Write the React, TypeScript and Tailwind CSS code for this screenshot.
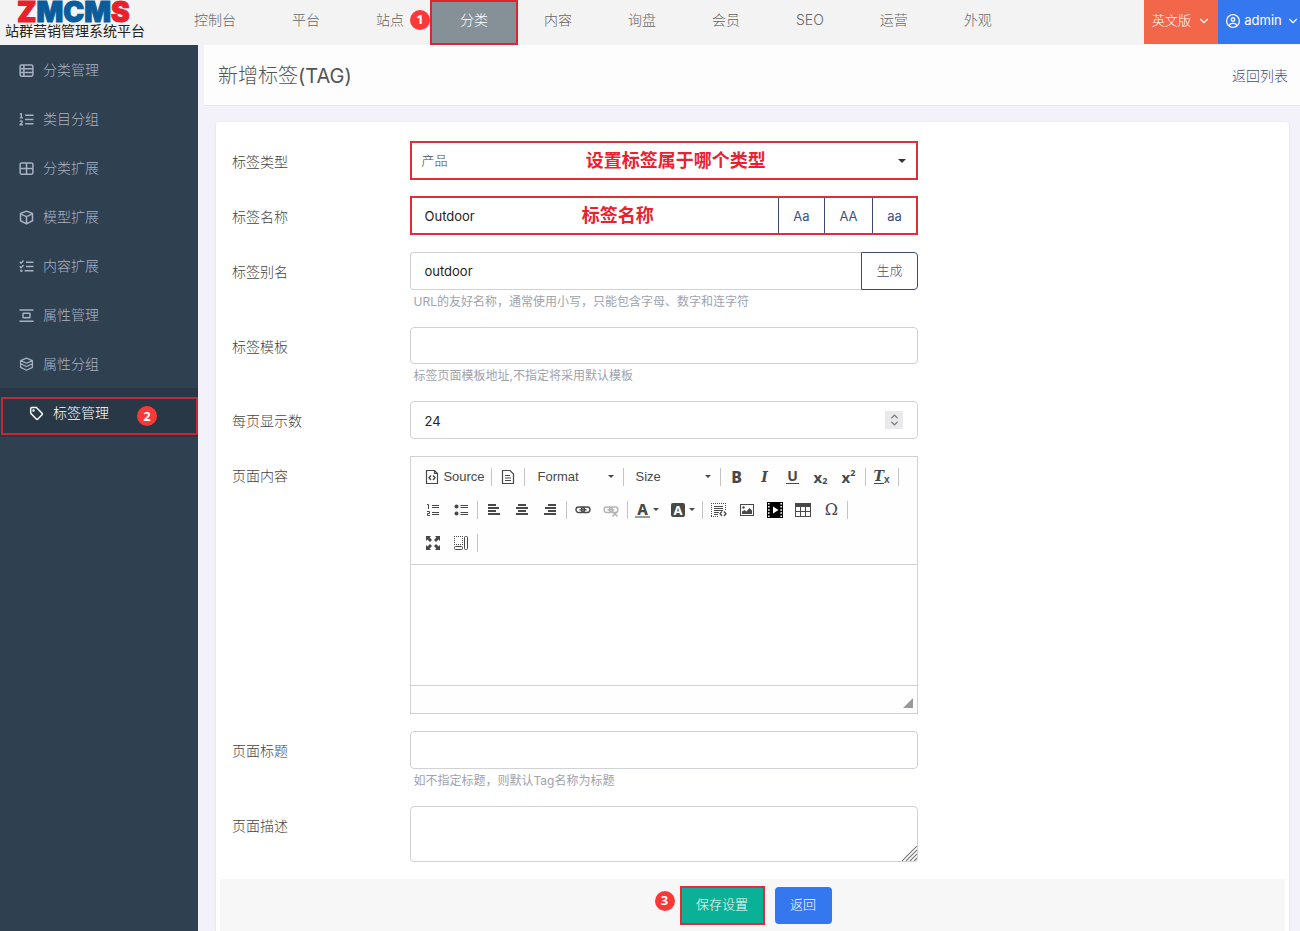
import { useState } from 'react';
import type { ReactNode } from 'react';
import clsx from 'clsx';
import { FaRegCircleUser } from 'react-icons/fa6';
import { LuChevronDown, LuChevronUp } from 'react-icons/lu';

const navItems = ['控制台', '平台', '站点', '分类', '内容', '询盘', '会员', 'SEO', '运营', '外观'];

const sideItems = [
  { name: '分类管理', icon: 'table' },
  { name: '类目分组', icon: 'ordered' },
  { name: '分类扩展', icon: 'grid' },
  { name: '模型扩展', icon: 'cube' },
  { name: '内容扩展', icon: 'check' },
  { name: '属性管理', icon: 'distribute' },
  { name: '属性分组', icon: 'layers' },
  { name: '标签管理', icon: 'tag' },
];

const sidePaths: Record<string, ReactNode> = {
  table: (
    <>
      <rect x="1.2" y="2" width="13.6" height="12" rx="1.5" />
      <path d="M1.2 6h13.6M1.2 10h13.6M5.2 2v12" />
    </>
  ),
  ordered: (
    <>
      <path d="M6.5 3.5H15.5M6.5 8H15.5M6.5 12.5H15.5" />
      <path d="M1 2.3l1.5-.6v4.6M.8 6.3h3.4M1 10.2c.8-1.1 2.7-.7 2.5.5-.1.8-1.4 1.7-2.5 2.9h3.2" strokeWidth="1.4" />
    </>
  ),
  grid: (
    <>
      <rect x="1.2" y="2" width="13.6" height="12" rx="1.5" />
      <path d="M1.2 8h13.6M8 2v12" />
    </>
  ),
  cube: <path d="M8 1.2l6.4 2.5v7.8L8 14.8l-6.4-3.3V3.7L8 1.2zM1.6 4.2L8 7l6.4-2.8M8 7v7.6" />,
  check: (
    <>
      <path d="M7.5 3.5H15.5M7.5 8H15.5M6 12.5h9.5" />
      <path d="M.8 3l1.4 1.500L4.800 1.600M.8 7.800l1.400 1.500 2.600-2.900" strokeWidth="1.4" />
      <circle cx="2.5" cy="12.5" r=".6" />
    </>
  ),
  distribute: (
    <>
      <path d="M.5 2h15M.5 14h15" />
      <rect x="4.3" y="5.6" width="7.4" height="4.8" rx=".6" />
    </>
  ),
  layers: (
    <path d="M8 1.2l6.3 2.700L8 6.600 1.700 3.900 8 1.200zM1.700 3.900v3.300L8 10.200l6.300-3V3.900M1.700 7.200v3.900l6.300 3 6.300-3V7.200" strokeWidth="1.3" />
  ),
  tag: (
    <>
      <path d="M1.8 2.8v5l6 6c.5.5 1.2.5 1.7 0l4.4-4.4c.5-.5.5-1.2 0-1.7l-6-6H2.8c-.6 0-1 .5-1 1.1z" />
      <circle cx="4.8" cy="4.8" r=".5" />
    </>
  ),
};

function SideIcon({ name }: { name: string }) {
  return (
    <svg viewBox="0 0 16 16" className="size-[15px] shrink-0" fill="none" stroke="currentColor" strokeWidth="1.6" strokeLinejoin="round">
      {sidePaths[name]}
    </svg>
  );
}

function Step({ n, className }: { n: number; className: string }) {
  return (
    <span
      className={clsx(
        'absolute flex size-5 items-center justify-center rounded-full bg-[#fb3838] font-["Open_Sans",sans-serif] text-[13px] font-bold text-white',
        className,
      )}
    >
      {n}
    </span>
  );
}

function Row({ label, htmlFor, help, children }: { label: string; htmlFor: string; help?: string; children: ReactNode }) {
  return (
    <div className="mb-[17px] grid grid-cols-12">
      <label htmlFor={htmlFor} className="col-span-2 px-3 pt-2.5 text-sm font-light text-[#444]">
        {label}
      </label>
      <div className="col-span-6 px-3">
        {children}
        {help && <p className="h-5 pt-0.5 pl-1 text-xs leading-5 text-[#a0a2ad]">{help}</p>}
      </div>
    </div>
  );
}

/* editor toolbar */

function Ico({ children }: { children: ReactNode }) {
  return (
    <svg viewBox="0 0 16 16" className="size-4" fill="none" stroke="currentColor">
      {children}
    </svg>
  );
}

function Tool({ title, children, className }: { title: string; children: ReactNode; className?: string }) {
  return (
    <button
      type="button"
      title={title}
      className={clsx('flex h-[27px] shrink-0 items-center justify-center text-[#484848]', className || 'w-7')}
    >
      {children}
    </button>
  );
}

const Sep = () => <span className="mx-0.5 h-[18px] w-px shrink-0 bg-[#c4c4c4]" />;

const Caret = () => <span className="border-x-3 border-t-3 border-x-transparent border-t-[#484848]" />;

function Combo({ label, className }: { label: string; className: string }) {
  return (
    <button type="button" className={clsx('flex h-[27px] shrink-0 items-center justify-between pr-[7px]', className)}>
      {label}
      <Caret />
    </button>
  );
}

const linkPaths = (
  <>
    <rect x="1" y="5" width="8.5" height="5.5" rx="2.7" strokeWidth="1.4" />
    <rect x="6.5" y="5" width="8.5" height="5.5" rx="2.7" strokeWidth="1.4" />
    <path d="M4.5 7.8h7" strokeWidth="1.4" />
  </>
);

function Toolbar() {
  return (
    <div className="border-b border-[#d1d1d1] bg-[#fefefe] px-2 pt-[3px] pb-[5px] font-['Liberation_Sans',sans-serif] text-[13px] text-[#484848]">
      <div className="flex h-[33px] items-center">
        <Tool title="Source" className="w-[70px] gap-[3px] pl-0.5">
          <Ico>
            <path d="M2.5 1.5h8l3 3v10h-11zM10.5 1.5v3h3" strokeWidth="1.2" />
            <path d="M7 6.5L5 8.8 7 11M9 6.5l2 2.3L9 11" strokeWidth="1.4" />
          </Ico>
          <span>Source</span>
        </Tool>
        <Sep />
        <Tool title="Templates">
          <Ico>
            <path d="M2.5 1.5h7.5l3.5 3.5v9.5h-11zM5 6.5h5M5 9h6M5 11.5h6" strokeWidth="1.2" />
          </Ico>
        </Tool>
        <Sep />
        <Combo label="Format" className="w-[94px] pl-[11px]" />
        <Sep />
        <Combo label="Size" className="w-[92px] pl-2.5" />
        <Sep />
        <Tool title="Bold">
          <span className="font-['Noto_Sans',sans-serif] text-base font-extrabold">B</span>
        </Tool>
        <Tool title="Italic">
          <span className="font-['DejaVu_Serif',serif] text-sm font-bold italic">I</span>
        </Tool>
        <Tool title="Underline">
          <span className="border-b border-[#484848] px-px font-['Noto_Sans',sans-serif] text-sm leading-[14px] font-bold">U</span>
        </Tool>
        <Tool title="Subscript">
          <span className="flex items-end font-['Noto_Sans',sans-serif] text-[15px] leading-4 font-bold">
            x<small className="text-[9px] leading-2">2</small>
          </span>
        </Tool>
        <Tool title="Superscript">
          <span className="flex items-start font-['Noto_Sans',sans-serif] text-[15px] leading-4 font-bold">
            x<small className="text-[9px] leading-2">2</small>
          </span>
        </Tool>
        <Sep />
        <Tool title="Remove Format">
          <span className="flex items-end">
            <span className="border-b border-[#484848] font-['DejaVu_Serif',serif] text-sm leading-[14px] font-bold italic">T</span>
            <small className="text-[10px] leading-2 font-bold">x</small>
          </span>
        </Tool>
        <Sep />
      </div>
      <div className="flex h-[33px] items-center">
        <Tool title="Numbered List">
          <Ico>
            <path d="M7 3.5h7M7 5.5h7M7 10.5h7M7 12.5h7" />
            <path d="M2 2.5h1.5V7M2 9.5h2.5v2H2.5v2H5" />
          </Ico>
        </Tool>
        <Tool title="Bulleted List">
          <Ico>
            <path d="M7.5 3.5H15M7.5 5.5H15M7.5 10.5H15M7.5 12.5H15" />
            <circle cx="3.5" cy="4.5" r="2" fill="currentColor" stroke="none" />
            <circle cx="3.5" cy="11.5" r="2" fill="currentColor" stroke="none" />
          </Ico>
        </Tool>
        <Sep />
        <Tool title="Align Left">
          <Ico>
            <path d="M2 3h8M2 6h11M2 9h8M2 12h12" strokeWidth="2" />
          </Ico>
        </Tool>
        <Tool title="Center">
          <Ico>
            <path d="M4 3h8M2 6h12M4 9h8M2 12h12" strokeWidth="2" />
          </Ico>
        </Tool>
        <Tool title="Align Right">
          <Ico>
            <path d="M6 3h8M3 6h11M6 9h8M2 12h12" strokeWidth="2" />
          </Ico>
        </Tool>
        <Sep />
        <Tool title="Link">
          <Ico>{linkPaths}</Ico>
        </Tool>
        <Tool title="Unlink" className="w-7 opacity-40">
          <Ico>
            {linkPaths}
            <path d="M9.5 9.5l5 5M14.5 9.5l-5 5" strokeWidth="1.6" />
          </Ico>
        </Tool>
        <Sep />
        <Tool title="Text Color" className="w-[35px] gap-[3px]">
          <span className="w-[15px] border-b-2 border-[#999] font-['Noto_Sans',sans-serif] text-[15px] leading-[14px] font-extrabold">A</span>
          <Caret />
        </Tool>
        <Tool title="Background Color" className="w-[35px] gap-1 pl-0.5">
          <span className="w-[14px] rounded-xs bg-[#484848] font-['Noto_Sans',sans-serif] text-[13px] leading-[14px] font-bold text-white">A</span>
          <Caret />
        </Tool>
        <Sep />
        <Tool title="Embed">
          <Ico>
            <path d="M0 1.5h15M0 14.5h8M.5 1v14M14.5 1v8" strokeDasharray="1 1" />
            <path d="M3 4.5h9M3 6.5h9M3 8.5h9M3 10.5h5M3 12.5h4" />
            <path d="M11 9.5l-2 2.2 2 2.3M13 9.5l2 2.2-2 2.3" strokeWidth="1.3" />
          </Ico>
        </Tool>
        <Tool title="Image">
          <Ico>
            <rect x="1.5" y="2.5" width="13" height="11" />
            <path d="M3 12V9.5l2.5-1.5 2 1.5L10.5 6 13 8.5V12z" fill="currentColor" stroke="none" />
            <circle cx="4.5" cy="5.5" r="1.2" fill="currentColor" stroke="none" />
          </Ico>
        </Tool>
        <Tool title="Video">
          <Ico>
            <path d="M0 0h16v16H0z" fill="#000" stroke="none" />
            <path d="M1.8 1v14M14.2 1v14" stroke="#fff" strokeWidth="1.6" strokeDasharray="1.5 1.6" />
            <path d="M6 4.5v7L11.5 8z" fill="#fff" stroke="none" />
          </Ico>
        </Tool>
        <Tool title="Table">
          <Ico>
            <rect x=".5" y="1.5" width="15" height="13" />
            <path d="M0 1h16v4H0z" fill="currentColor" stroke="none" />
            <path d="M0 9.5h16M5.5 5v9.5M10.5 5v9.5" />
          </Ico>
        </Tool>
        <Tool title="Special Character">
          <span className="pl-0.5 font-['DejaVu_Serif',serif] text-base">Ω</span>
        </Tool>
        <Sep />
      </div>
      <div className="flex h-[33px] items-center">
        <Tool title="Maximize">
          <Ico>
            <path d="M1 1h5L4.600 2.500 7 5 5 7 2.500 4.600 1 6zM15 1v5l-1.500-1.400L11 7 9 5l2.400-2.500L10 1zM1 15v-5l1.500 1.400L5 9l2 2-2.400 2.500L6 15zM15 15h-5l1.400-1.500L9 11l2-2 2.500 2.400L15 10z" fill="currentColor" stroke="none" />
          </Ico>
        </Tool>
        <Tool title="Show Blocks">
          <Ico>
            <path d="M1 1.5h9M1 9.5h9M1.500 1v9M9.500 1v9" strokeDasharray="1 1" />
            <rect x="11.5" y="1.5" width="3" height="13" rx="1" />
            <rect x="1.5" y="11.5" width="8" height="3" rx="1" />
          </Ico>
        </Tool>
        <Sep />
      </div>
    </div>
  );
}

const inputStyle = 'block w-full rounded border border-[#d0d2d6] bg-white px-3.5 pt-px text-[13px] text-[#222] outline-none';
const caseStyle = 'border-l border-[#3b4a75] pt-0.5 text-[13px] text-[#3f4f80]';

export default function App() {
  const [name, setName] = useState('Outdoor');
  const [alias, setAlias] = useState('outdoor');
  const [size, setSize] = useState(24);

  return (
    <div className="flex min-h-screen flex-col bg-[#f3f2fb] font-[Inter,'Noto_Sans_CJK_SC',sans-serif]">
      <header className="flex h-[45px] bg-[#f3f3f3]">
        <div className="flex w-[166px] shrink-0 flex-col pl-[5px]">
          <p className="h-[23px] pl-3 text-[28px] leading-6 font-black whitespace-nowrap text-[#0a5c9c] [-webkit-text-stroke:1px]">
            <span className="text-[#e8202c]">Z</span>MCM<span className="text-[#e8202c]">S</span>
          </p>
          <p className="text-sm leading-4 whitespace-nowrap text-[#222]">站群营销管理系统平台</p>
        </div>
        <nav className="flex">
          {navItems.map((item) => (
            <div key={item} className="relative flex">
              <a
                href="#"
                className={clsx(
                  'flex items-center text-sm font-light whitespace-nowrap',
                  item === '分类'
                    ? '-mx-0.5 border-2 border-[#d9262f] bg-[#869097] px-[27px] pb-1.5 text-white'
                    : 'px-7 pb-1.5 text-[#666]',
                  item === '分类' && 'w-[88px] justify-center',
                )}
              >
                {item}
              </a>
              {item === '站点' && <Step n={1} className="top-2.5 right-0.5 z-10" />}
            </div>
          ))}
        </nav>
        <div className="ml-auto flex h-11 text-[13px] text-white">
          <button type="button" className="flex w-[74px] items-center justify-between bg-[#f26749] pr-[7px] pb-[3px] pl-2 font-light">
            英文版
            <LuChevronDown className="size-3.5" />
          </button>
          <button type="button" className="flex w-[82px] items-center justify-between bg-[#3577ef] pb-[3px] pl-2">
            <FaRegCircleUser className="size-3.5" />
            admin
            <LuChevronDown className="size-3.5" />
          </button>
        </div>
      </header>

      <div className="flex flex-1">
        <aside className="w-[198px] shrink-0 bg-[#2f4051]">
          {sideItems.map((item) =>
            item.icon === 'tag' ? (
              <div key={item.name} className="bg-[#293846] pt-[9px] pb-0.5">
                <a
                  href="#"
                  className="relative ml-px flex h-[38px] items-center gap-[9px] border-2 border-[#c92832] pb-1.5 pl-[26px] text-sm font-light text-white"
                >
                  <SideIcon name={item.icon} />
                  {item.name}
                  <Step n={2} className="top-[7px] right-[39px]" />
                </a>
              </div>
            ) : (
              <a key={item.name} href="#" className="flex h-[49px] items-center gap-[9px] pt-px pl-[19px] text-sm font-light text-[#a7b1c2]">
                <SideIcon name={item.icon} />
                {item.name}
              </a>
            ),
          )}
        </aside>

        <main className="flex min-w-0 flex-1 flex-col pl-1.5">
          <div className="flex h-[61px] items-center justify-between border-b border-[#e6e6ea] bg-[#fdfdfd] pt-px pr-3 pl-3.5">
            <h1 className="text-xl font-light text-[#555]">
              新增标签<span className="font-normal">(TAG)</span>
            </h1>
            <a href="#" className="text-sm font-light text-[#3f4f80]">
              返回列表
            </a>
          </div>

          <form className="mt-4 mr-[11px] ml-3 flex flex-1 flex-col rounded-t bg-white px-1 pt-5 shadow-sm" onSubmit={(e) => e.preventDefault()}>
            <Row label="标签类型" htmlFor="type">
              <div className="relative -mt-px flex h-[39px] items-center border-2 border-[#dc2f38]">
                <select id="type" className="h-full w-full appearance-none bg-white pl-2.5 text-[13px] font-light text-[#444] outline-none">
                  <option>产品</option>
                </select>
                <span className="pointer-events-none absolute right-2.5 border-x-4 border-t-4 border-x-transparent border-t-[#333]" />
                <span className="pointer-events-none absolute inset-x-0 pl-6 text-center text-lg font-bold text-[#e8232f]">设置标签属于哪个类型</span>
              </div>
            </Row>

            <Row label="标签名称" htmlFor="name">
              <div className="relative -mt-px flex h-[39px] border-2 border-[#dc2f38]">
                <input
                  id="name"
                  value={name}
                  onChange={(e) => setName(e.target.value)}
                  className="min-w-0 flex-1 bg-white pt-0.5 pl-[13px] text-[13px] text-[#222] outline-none"
                />
                <button type="button" className={clsx(caseStyle, 'w-[46px]')}>
                  Aa
                </button>
                <button type="button" className={clsx(caseStyle, 'w-12')} onClick={() => setName(name.toUpperCase())}>
                  AA
                </button>
                <button type="button" className={clsx(caseStyle, 'w-11')} onClick={() => setName(name.toLowerCase())}>
                  aa
                </button>
                <span className="pointer-events-none absolute inset-x-0 top-1 pr-[92px] text-center text-lg font-bold text-[#e8232f]">标签名称</span>
              </div>
            </Row>

            <Row label="标签别名" htmlFor="alias" help="URL的友好名称，通常使用小写，只能包含字母、数字和连字符">
              <div className="flex h-[38px]">
                <input
                  id="alias"
                  value={alias}
                  onChange={(e) => setAlias(e.target.value)}
                  className="min-w-0 flex-1 rounded-l border border-r-0 border-[#d0d2d6] bg-white px-3.5 pt-px text-[13px] text-[#222] outline-none"
                />
                <button
                  type="button"
                  onClick={() => setAlias(name.toLowerCase())}
                  className="w-[57px] rounded-r border border-[#3b4a75] text-[13px] font-light text-[#3f4f80]"
                >
                  生成
                </button>
              </div>
            </Row>

            <Row label="标签模板" htmlFor="template" help="标签页面模板地址,不指定将采用默认模板">
              <input id="template" className={clsx(inputStyle, 'h-[37px]')} />
            </Row>

            <Row label="每页显示数" htmlFor="size">
              <div className="relative flex items-center">
                <input
                  id="size"
                  type="number"
                  value={size}
                  onChange={(e) => setSize(Number(e.target.value))}
                  className={clsx(inputStyle, 'h-[38px] [appearance:textfield] [&::-webkit-inner-spin-button]:appearance-none')}
                />
                <span className="absolute right-[15px] flex h-[18px] w-[18px] flex-col items-center justify-between bg-[#e9e9ec] text-[#777]">
                  <button type="button" aria-label="增加" className="h-[9px]" onClick={() => setSize(size + 1)}>
                    <LuChevronUp className="size-[11px]" strokeWidth={3} />
                  </button>
                  <button type="button" aria-label="减少" className="h-[9px]" onClick={() => setSize(size - 1)}>
                    <LuChevronDown className="-mt-0.5 size-[11px]" strokeWidth={3} />
                  </button>
                </span>
              </div>
            </Row>

            <Row label="页面内容" htmlFor="content">
              <div className="border border-[#d1d1d1]">
                <Toolbar />
                <textarea id="content" className="block h-[120px] w-full resize-none bg-white p-5 text-[13px] outline-none" />
                <div className="flex h-7 items-end justify-end border-t border-[#d1d1d1] bg-[#fefefe] pr-1 pb-[5px]">
                  <span className="border-b-10 border-l-10 border-b-[#999] border-l-transparent" />
                </div>
              </div>
            </Row>

            <Row label="页面标题" htmlFor="title" help="如不指定标题，则默认Tag名称为标题">
              <input id="title" className={clsx(inputStyle, 'h-[38px]')} />
            </Row>

            <Row label="页面描述" htmlFor="desc">
              <div className="relative">
                <textarea id="desc" className={clsx(inputStyle, 'h-14 resize-none py-2')} />
                <svg viewBox="0 0 15 15" className="pointer-events-none absolute right-px bottom-px size-[15px]" stroke="#777" strokeWidth="1.1">
                  <path d="M0 15L15 0M4 15L15 4M8 15l7-7M12 15l3-3" />
                </svg>
              </div>
            </Row>

            <div className="mt-auto flex h-[52px] items-center justify-center gap-2.5 bg-[#f7f7f7] pl-1.5 text-[13px] font-light">
              <div className="relative">
                <button type="submit" className="block h-[39px] w-[85px] border-2 border-[#dc2f38] bg-[#0bb197] text-white">
                  保存设置
                </button>
                <Step n={3} className="top-[5px] -left-[25px]" />
              </div>
              <button type="button" className="h-[37px] w-[57px] rounded bg-[#3577ef] text-white">
                返回
              </button>
            </div>
          </form>
        </main>
      </div>
    </div>
  );
}
